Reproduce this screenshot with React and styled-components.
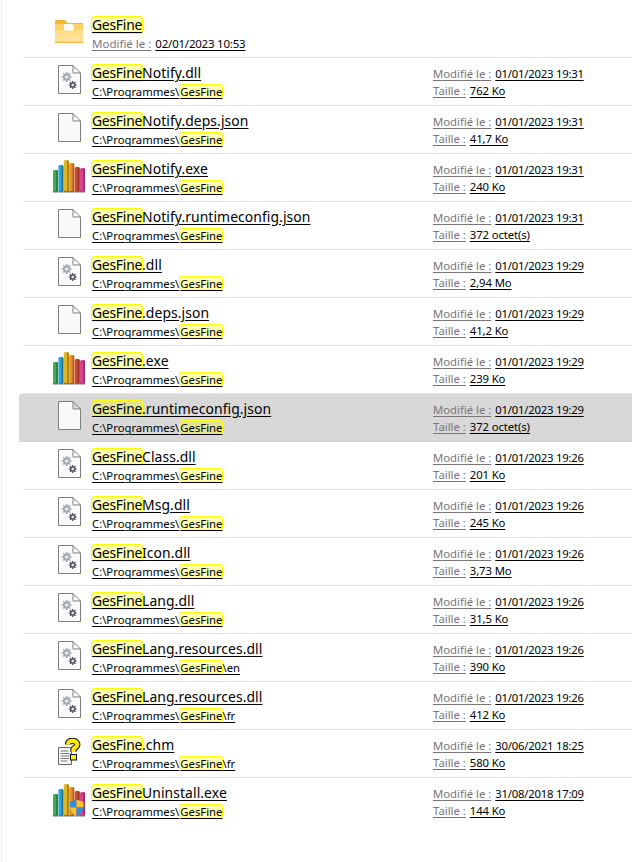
import React from "react";
import styled, { createGlobalStyle } from "styled-components";

const Global = createGlobalStyle`
  html, body { margin: 0; padding: 0; background: #fff; }
  body { font-family: "Noto Sans", "Open Sans", sans-serif; color: #000; }
`;

const Page = styled.div`
  width: 631px;
  height: 862px;
  box-sizing: border-box;
  margin-left: 1px;
  padding: 10px 0 0 17px;
  border-left: 1px solid #ececec;
  overflow: hidden;
`;
const List = styled.div`
  display: flex;
  flex-direction: column;
`;
const Row = styled.div`
  height: 48px;
  box-sizing: border-box;
  margin-left: ${(p) => (p.$selected ? "0" : "4px")};
  padding-left: ${(p) => (p.$selected ? "30px" : "26px")};
  display: flex;
  align-items: flex-start;
  background: ${(p) => (p.$selected ? "#d8d8d8" : "transparent")};
  border-radius: ${(p) => (p.$selected ? "2px 0 0 2px" : "0")};
  border-bottom: 1px solid ${(p) => (p.$selected ? "#cfcfcf" : "#e2e2e2")};
  &:last-child { border-bottom-color: transparent; }
`;
const IconBox = styled.div`
  width: 40px;
  height: 47px;
  flex: none;
  display: flex;
  align-items: flex-start;
  justify-content: center;
  padding-top: 7px;
  box-sizing: border-box;
`;
const Main = styled.div`
  width: 342px;
  flex: none;
  padding-top: 5px;
  margin-left: 2px;
`;
const NameLine = styled.div`
  font-size: 13.9px;
  line-height: 19px;
  height: 19px;
  letter-spacing: 0.08px;
  white-space: nowrap;
  text-decoration: underline;
  text-underline-offset: 2px;
`;
const SubLine = styled.div`
  font-size: 11.3px;
  line-height: 16px;
  height: 16px;
  margin: 2px 0 0 1px;
  white-space: nowrap;
  text-decoration: underline;
  text-underline-offset: 2px;
`;
const FolderMeta = styled.div`
  font-size: 11.5px;
  line-height: 16px;
  height: 16px;
  margin: 2px 0 0 1px;
  white-space: nowrap;
  display: flex;
  gap: 4px;
`;
const Mark = styled.span`
  display: inline-block;
  box-sizing: border-box;
  height: ${(p) => (p.$small ? "15px" : "18px")};
  line-height: ${(p) => (p.$small ? "13px" : "16px")};
  letter-spacing: ${(p) => (p.$small ? "0" : "-0.25px")};
  background: rgba(255, 255, 0, 0.3);
  border: 1px solid #ffff00;
  border-radius: 3px;
  margin-right: -1px;
  text-decoration: underline;
  text-underline-offset: 2px;
`;
const Meta = styled.div`
  flex: none;
  padding-top: 8px;
  display: flex;
  flex-direction: column;
  gap: 1px;
`;
const MetaLine = styled.div`
  font-size: 11.3px;
  line-height: 16px;
  white-space: nowrap;
  display: flex;
  gap: 4px;
`;
const Label = styled.span`
  color: #7c7478;
  text-decoration: underline;
  text-underline-offset: 2px;
`;
const Value = styled.span`
  color: #000;
  letter-spacing: ${(p) => (p.$date ? "-0.22px" : "-0.1px")};
  text-decoration: underline;
  text-underline-offset: 2px;
`;

const FolderIcon = () => (
  <svg width="30" height="24" viewBox="0 0 30 24" style={{ marginTop: 3 }}>
    <defs>
      <linearGradient id="folderFront" x1="0" y1="0" x2="0" y2="1">
        <stop offset="0" stopColor="#fedc82" />
        <stop offset="1" stopColor="#ffe6a3" />
      </linearGradient>
    </defs>
    <path d="M1 1.500C1 .5 1.500 0 2.500 0h8l3 3h14.500c.7 0 1 .4 1 1V10H1z" fill="#f6b436" />
    <path d="M1 4h28v8H1z" fill="#fbd36b" />
    <path d="M10 4h8l2 2v6H10z" fill="#fdfaf0" />
    <path d="M1 10.500h28V22c0 .6-.4 1-1 1H2c-.6 0-1-.4-1-1z" fill="url(#folderFront)" />
    <rect x="1" y="21.500" width="28" height="1.500" fill="#f4bb4a" />
  </svg>
);
const Sheet = () => (
  <path d="M1.500 .5H16L23.500 8V28.500H1.500Z M16 .5V8H23.500" fill="#fafafa" stroke="#7f7f7f" strokeWidth="1" />
);
const FileIcon = () => (
  <svg width="24" height="30" viewBox="0 0 24 30"><Sheet /></svg>
);
function gearPath(cx, cy, r, teeth) {
  const pts = [];
  const step = (Math.PI * 2) / teeth;
  for (let i = 0; i < teeth; i++) {
    const a = i * step;
    [[-0.32, 0.72], [-0.18, 1], [0.18, 1], [0.32, 0.72]].forEach(([o, k]) => {
      const t = a + o * step * 1.1;
      pts.push(`${(cx + Math.cos(t) * r * k).toFixed(2)} ${(cy + Math.sin(t) * r * k).toFixed(2)}`);
    });
  }
  return `M${pts.join("L")}Z`;
}
const Gear = ({ cx, cy, r, fill }) => (
  <g>
    <path d={gearPath(cx, cy, r, 8)} fill={fill} />
    <circle cx={cx} cy={cy} r={r * 0.32} fill="#f0f0f0" />
  </g>
);
const DllIcon = () => (
  <svg width="24" height="30" viewBox="0 0 24 30">
    <Sheet />
    <Gear cx={9.7} cy={12} r={5} fill="#a3abb3" />
    <Gear cx={15.7} cy={20} r={4} fill="#55595e" />
  </svg>
);
const bars = [
  [10, "#43ab55", "#2a7d3a"],
  [5, "#2fa5d8", "#1d7299"],
  [0, "#e3b624", "#a5810f"],
  [3, "#e78f30", "#b2661b"],
  [7, "#ce4a33", "#96301f"],
  [8, "#d6458f", "#a02c68"],
];
const ShelfIcon = ({ shield }) => (
  <svg width="34" height="34" viewBox="0 0 34 34" style={{ marginTop: -1 }}>
    {bars.map(([y, a, b], i) => {
      const x = 1 + i * 5.4;
      const h = 32 - y;
      return (
        <g key={i}>
          <rect x={x} y={y} width="5" height={h} rx="1.500" fill={a} />
          <rect x={x + 3.2} y={y + 0.5} width="1.800" height={h - 1} fill={b} />
          <rect x={x} y={31} width="5" height="1.500" fill="#6e6e6e" />
        </g>
      );
    })}
    {shield && (
      <g>
        <path d="M18 18c3-1 5-2 6.500-2.500V23.500H18z" fill="#2f8fdc" />
        <path d="M24.500 15.500c2 .7 4 1.500 7 2.500v5.500h-7z" fill="#f7c52b" />
        <path d="M18 23.500h6.500V32c-3-1-5.500-4-6.500-8.500z" fill="#f7c52b" />
        <path d="M24.500 23.500h7c-1 4.500-3.500 7.500-7 8.500z" fill="#2f8fdc" />
      </g>
    )}
  </svg>
);
const questionStroke = "M11 6.500C11 3.500 13.500 2.800 15.500 2.800C18.500 2.800 20.300 4.300 20.300 6.500C20.300 9 18 9.500 16.500 11V14";
const HelpIcon = () => (
  <svg width="24" height="28" viewBox="0 0 24 28" style={{ marginTop: 1 }}>
    <path d="M1.500 9.500h11l2 2v15H1.500z" fill="#fafafa" stroke="#666" />
    <path d="M3.500 13h8M3.500 15.500h9M3.500 18h9M3.500 20.500h9M3.500 23h7" stroke="#777" strokeWidth="1" />
    <path d={questionStroke} fill="none" stroke="#111" strokeWidth="6.200" />
    <path d={questionStroke} fill="none" stroke="#ffe900" strokeWidth="4.200" />
    <rect x="13.500" y="16.500" width="6" height="5.500" fill="#ffe900" stroke="#111" />
  </svg>
);
const icons = {
  dll: DllIcon,
  file: FileIcon,
  exe: () => <ShelfIcon />,
  uninst: () => <ShelfIcon shield />,
  chm: HelpIcon,
};

const rows = [
  ["dll", "Notify.dll", "", "01/01/2023 19:31", "762 Ko"],
  ["file", "Notify.deps.json", "", "01/01/2023 19:31", "41,7 Ko"],
  ["exe", "Notify.exe", "", "01/01/2023 19:31", "240 Ko"],
  ["file", "Notify.runtimeconfig.json", "", "01/01/2023 19:31", "372 octet(s)"],
  ["dll", ".dll", "", "01/01/2023 19:29", "2,94 Mo"],
  ["file", ".deps.json", "", "01/01/2023 19:29", "41,2 Ko"],
  ["exe", ".exe", "", "01/01/2023 19:29", "239 Ko"],
  ["file", ".runtimeconfig.json", "", "01/01/2023 19:29", "372 octet(s)", true],
  ["dll", "Class.dll", "", "01/01/2023 19:26", "201 Ko"],
  ["dll", "Msg.dll", "", "01/01/2023 19:26", "245 Ko"],
  ["dll", "Icon.dll", "", "01/01/2023 19:26", "3,73 Mo"],
  ["dll", "Lang.dll", "", "01/01/2023 19:26", "31,5 Ko"],
  ["dll", "Lang.resources.dll", "\\en", "01/01/2023 19:26", "390 Ko"],
  ["dll", "Lang.resources.dll", "\\fr", "01/01/2023 19:26", "412 Ko"],
  ["chm", ".chm", "\\fr", "30/06/2021 18:25", "580 Ko"],
  ["uninst", "Uninstall.exe", "", "31/08/2018 17:09", "144 Ko"],
];

export default function App() {
  return (
    <Page>
      <Global />
      <List>
        <Row>
          <IconBox><FolderIcon /></IconBox>
          <Main>
            <NameLine><Mark>GesFine</Mark></NameLine>
            <FolderMeta>
              <Label>Modifié le :</Label><Value $date>02/01/2023 10:53</Value>
            </FolderMeta>
          </Main>
        </Row>
        {rows.map(([icon, rest, sub, date, size, sel], i) => {
          const Icon = icons[icon];
          return (
            <Row key={i} $selected={sel}>
              <IconBox><Icon /></IconBox>
              <Main>
                <NameLine><Mark>GesFine</Mark>{rest}</NameLine>
                <SubLine>C:\Programmes\<Mark $small>GesFine</Mark>{sub}</SubLine>
              </Main>
              <Meta>
                <MetaLine><Label>Modifié le :</Label><Value $date>{date}</Value></MetaLine>
                <MetaLine><Label>Taille :</Label><Value>{size}</Value></MetaLine>
              </Meta>
            </Row>
          );
        })}
      </List>
    </Page>
  );
}
